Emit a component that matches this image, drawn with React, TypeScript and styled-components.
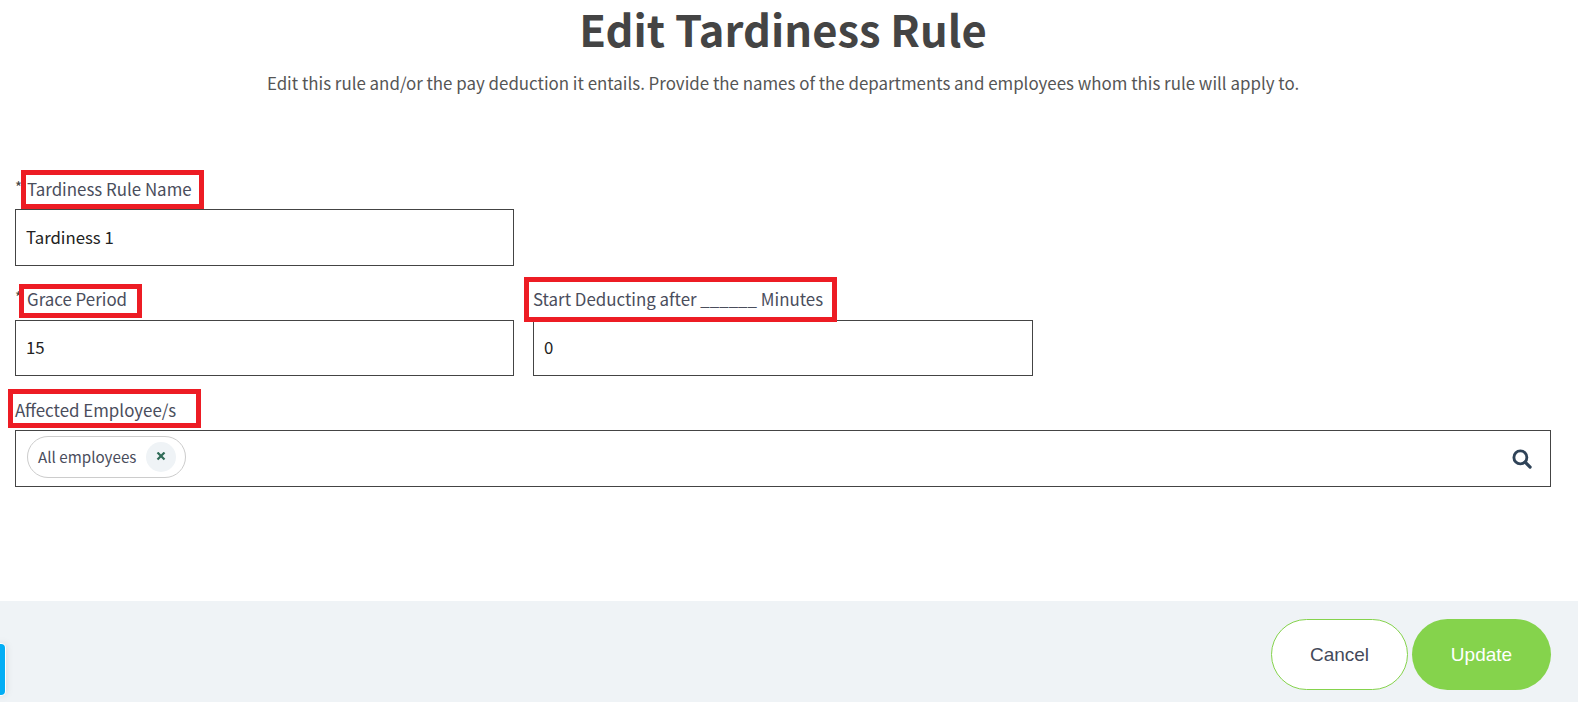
import React from "react";
import styled, { createGlobalStyle } from "styled-components";

const Global = createGlobalStyle`
  html, body { margin: 0; padding: 0; background: #fff; overflow: hidden; }
  body { font-family: "Noto Sans CJK SC", "Noto Sans", sans-serif; }
`;

const Page = styled.div`
  position: relative;
  width: 1578px;
  height: 704px;
  overflow: hidden;
  display: flex;
  flex-direction: column;
`;
const Main = styled.main`
  height: 601px;
  padding: 0 27px 0 15px;
  box-sizing: border-box;
`;
const Header = styled.header`
  text-align: center;
  height: 166px;
`;
const Title = styled.h1`
  margin: 0;
  font-size: 43.5px;
  line-height: 58px;
  font-weight: 700;
  color: #444;
`;
const Subtitle = styled.p`
  margin: 12px 0 0;
  font-size: 16.9px;
  line-height: 26px;
  color: #555;
`;
const Row = styled.div`
  display: flex;
  gap: 19px;
  margin-bottom: 11px;
`;
const Field = styled.div<{ $w: number }>`
  width: ${(p) => p.$w}px;
`;
const LabelLine = styled.div<{ $raised?: boolean }>`
  display: flex;
  align-items: center;
  box-sizing: border-box;
  height: 43px;
  padding-top: ${(p) => (p.$raised ? 0 : 2)}px;
  font-size: 16.9px;
  line-height: 23px;
  color: #4a4d5c;
`;
const Star = styled.span`
  font-size: 15px;
  width: 12px;
  margin-top: -5px;
  color: #444;
`;
const LabelText = styled.span`
  position: relative;
`;
const Annotation = styled.span<{ $l: number; $t: number; $w: number; $h: number }>`
  position: absolute;
  left: ${(p) => p.$l}px;
  top: ${(p) => p.$t}px;
  width: ${(p) => p.$w}px;
  height: ${(p) => p.$h}px;
  box-sizing: border-box;
  border: 5px solid #ed1c24;
`;
const Box = styled.div<{ $short?: boolean }>`
  box-sizing: border-box;
  height: ${(p) => (p.$short ? 56 : 57)}px;
  border: 1px solid #444;
  display: flex;
  align-items: center;
  justify-content: space-between;
  padding: 0 10px 2px;
  font-size: 16.8px;
  color: #222;
`;
const Chip = styled.span`
  display: inline-flex;
  align-items: center;
  align-self: flex-start;
  box-sizing: border-box;
  height: 42px;
  margin: 5px 0 0 1px;
  padding: 0 9px 0 10px;
  gap: 10px;
  border: 1px solid #ccc;
  border-radius: 21px;
  font-size: 15.2px;
  color: #4a4d5c;
`;
const ChipLabel = styled.span`
  margin-top: -2px;
`;
const ChipClose = styled.span`
  width: 30px;
  height: 30px;
  border-radius: 50%;
  background: #eff3f6;
  display: flex;
  align-items: center;
  justify-content: center;
`;
const SearchIcon = styled.svg`
  width: 20px;
  height: 20px;
  margin: 2px 8px 0 0;
`;
const Footer = styled.footer`
  height: 101px;
  background: #eff3f6;
  display: flex;
  justify-content: flex-end;
  align-items: flex-start;
  gap: 4px;
  padding: 18px 27px 0 0;
  box-sizing: border-box;
`;
const Button = styled.button<{ $primary?: boolean }>`
  height: 71px;
  width: ${(p) => (p.$primary ? "139px" : "137px")};
  border-radius: 36px;
  border: ${(p) => (p.$primary ? "none" : "1px solid #85d34c")};
  background: ${(p) => (p.$primary ? "#85d34c" : "#fff")};
  color: ${(p) => (p.$primary ? "#fff" : "#44495a")};
  font-family: "Liberation Sans", Arial, sans-serif;
  font-size: 19px;
  padding: 0;
`;
const Tab = styled.div`
  position: absolute;
  left: -3px;
  top: 644px;
  width: 8px;
  height: 51px;
  border-radius: 4px;
  background: #03aef5;
  box-shadow: 0 0 0 1px #fff, 0 0 8px rgba(0, 0, 0, 0.15);
`;

export default function App() {
  return (
    <Page>
      <Global />
      <Main>
        <Header>
          <Title>Edit Tardiness Rule</Title>
          <Subtitle>
            Edit this rule and/or the pay deduction it entails. Provide the names of the departments and employees whom this rule will apply to.
          </Subtitle>
        </Header>
        <Row>
          <Field $w={499}>
            <LabelLine>
              <Star>*</Star>
              <LabelText>
                Tardiness Rule Name
                <Annotation $l={-6} $t={-7} $w={183} $h={39} />
              </LabelText>
            </LabelLine>
            <Box>Tardiness 1</Box>
          </Field>
        </Row>
        <Row>
          <Field $w={499}>
            <LabelLine $raised>
              <Star>*</Star>
              <LabelText>
                Grace Period
                <Annotation $l={-8} $t={-3} $w={123} $h={34} />
              </LabelText>
            </LabelLine>
            <Box $short>15</Box>
          </Field>
          <Field $w={500}>
            <LabelLine $raised>
              <LabelText>
                Start Deducting after ______ Minutes
                <Annotation $l={-9} $t={-10} $w={313} $h={45} />
              </LabelText>
            </LabelLine>
            <Box $short>0</Box>
          </Field>
        </Row>
        <Row>
          <Field $w={1536}>
            <LabelLine>
              <LabelText>
                Affected Employee/s
                <Annotation $l={-7} $t={-9} $w={193} $h={39} />
              </LabelText>
            </LabelLine>
            <Box>
              <Chip>
                <ChipLabel>All employees</ChipLabel>
                <ChipClose>
                  <svg width="10" height="10" viewBox="0 0 10 10">
                    <path d="M1.5 0.5L8.5 7.5M8.5 0.5L1.5 7.5" stroke="#2f6b57" strokeWidth="2.2" />
                  </svg>
                </ChipClose>
              </Chip>
              <SearchIcon viewBox="0 0 21 21">
                <circle cx="8.8" cy="8.8" r="6.8" fill="none" stroke="#2f4358" strokeWidth="3" />
                <path d="M13.8 13.8L19 19" stroke="#2f4358" strokeWidth="3.4" strokeLinecap="round" />
              </SearchIcon>
            </Box>
          </Field>
        </Row>
      </Main>
      <Footer>
        <Button>Cancel</Button>
        <Button $primary>Update</Button>
      </Footer>
      <Tab />
    </Page>
  );
}
